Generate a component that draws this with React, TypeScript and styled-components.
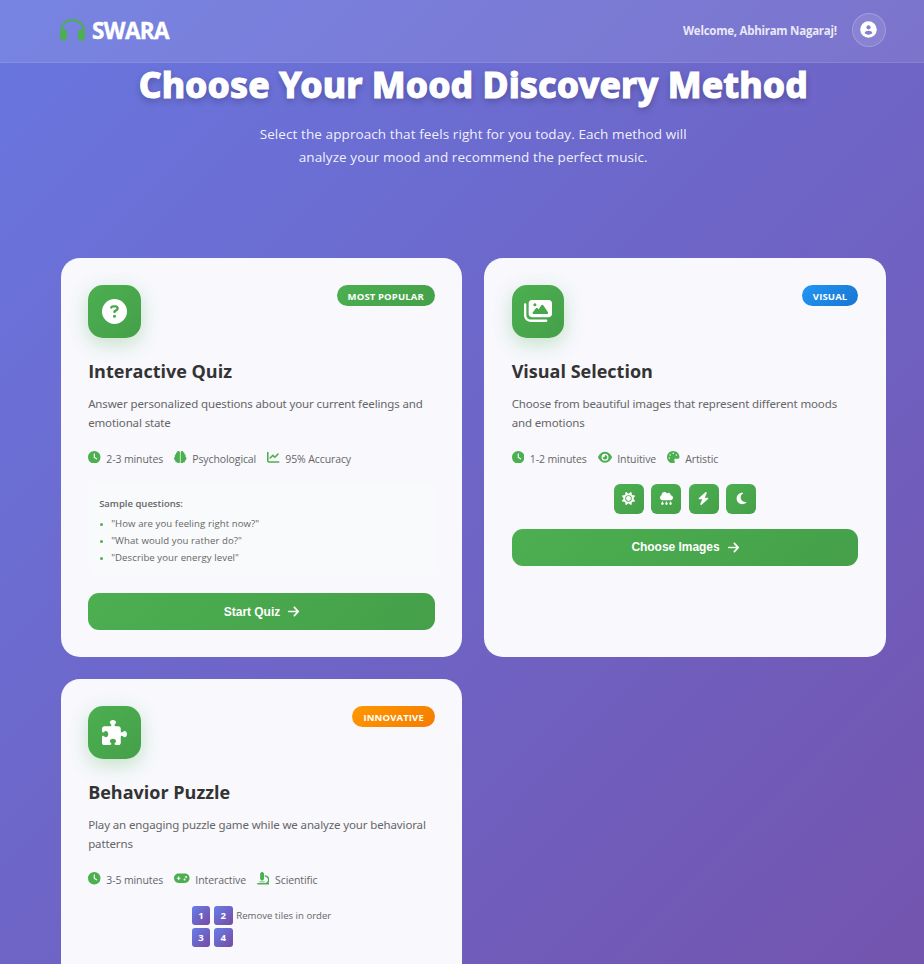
import React from "react";
import styled, { createGlobalStyle } from "styled-components";
import {
  FaArrowRight, FaBolt, FaBrain, FaChartLine, FaCircleQuestion, FaClock, FaCloudRain, FaEye,
  FaGamepad, FaImages, FaMicroscope, FaMoon, FaPalette, FaPuzzlePiece, FaSun,
} from "react-icons/fa6";

const green = "linear-gradient(135deg, #4caf50, #45a049)";
const ui = '"Open Sans", "Noto Sans", sans-serif';

const GlobalStyle = createGlobalStyle`
  * { box-sizing: border-box; margin: 0; padding: 0; }
  body { overflow: hidden; font-family: ${ui}; }
`;

const Page = styled.div`
  height: 964px;
  overflow: hidden;
  background: linear-gradient(135deg, #667eea 0%, #764ba2 100%) 0 -400px / 100% 1850px;
`;

const Header = styled.header`
  height: 63px;
  padding: 0 38.25px 1px 60px;
  display: flex;
  align-items: center;
  justify-content: space-between;
  background: rgba(255, 255, 255, 0.1);
  border-bottom: 1px solid rgba(255, 255, 255, 0.1);
`;

const Brand = styled.div`
  display: flex;
  align-items: center;
  gap: 7px;
  color: #fff;
  font-size: 22.5px;
  line-height: 30px;
  font-weight: 700;
  letter-spacing: -0.6px;
  -webkit-text-stroke: 0.4px #fff;

  svg { width: 25px; height: 22px; margin-top: -2px; }
`;

const Account = styled.div`
  display: flex;
  align-items: center;
  gap: 15px;
  color: rgba(255, 255, 255, 0.85);
  font-size: 11.5px;
  font-weight: 700;
  letter-spacing: -0.26px;
`;

const Avatar = styled.div`
  width: 34px;
  height: 34px;
  display: flex;
  align-items: center;
  justify-content: center;
  margin-bottom: 2px;
  padding-bottom: 1px;
  border: 1px solid rgba(255, 255, 255, 0.2);
  border-radius: 50%;
  background: rgba(255, 255, 255, 0.1);
`;

const Intro = styled.section`
  height: 195px;
  width: 825px;
  margin-left: 60.75px;
  text-align: center;
`;

const Heading = styled.h1`
  color: #fff;
  font-family: "Noto Sans", sans-serif;
  font-size: 35.5px;
  line-height: 43px;
  font-weight: 800;
  letter-spacing: 0.08px;
  white-space: nowrap;
  -webkit-text-stroke: 1px #fff;
  text-shadow: 0 3px 7px rgba(0, 0, 0, 0.25);
`;

const Lead = styled.p`
  width: 450px;
  margin: 17px auto 0;
  color: rgba(255, 255, 255, 0.92);
  font-size: 13.5px;
  line-height: 23px;
  letter-spacing: 0.09px;
`;

const Grid = styled.main`
  width: 825px;
  margin-left: 60.75px;
  display: grid;
  grid-template-columns: 1fr 1fr;
  grid-template-rows: 399px 399px;
  gap: 22.4px 22px;
`;

const Card = styled.article`
  padding: 27px 27.4px;
  border-radius: 19px;
  background: #f8f8fd;
`;

const CardTop = styled.div`
  display: flex;
  justify-content: space-between;
  align-items: flex-start;
`;

const Emblem = styled.div<{ $size: number }>`
  width: 52.5px;
  height: 52.5px;
  display: grid;
  place-items: center;
  border-radius: 15px;
  color: #fff;
  font-size: ${(p) => p.$size}px;
  background: ${green};
  box-shadow: 0 6px 19px rgba(76, 175, 80, 0.3);
`;

const tones = {
  green,
  blue: "linear-gradient(135deg, #2196f3, #1976d2)",
  orange: "linear-gradient(135deg, #ff9800, #f57c00)",
};

const Badge = styled.span<{ $tone: keyof typeof tones }>`
  height: 21px;
  padding: 1px 11px 0;
  border-radius: 15px;
  background: ${(p) => tones[p.$tone]};
  color: #fff;
  font-size: 9.5px;
  line-height: 21px;
  font-weight: 700;
  letter-spacing: 0.14px;
`;

const Title = styled.h2`
  margin-top: 21.2px;
  color: #333;
  font-size: 18px;
  line-height: 24px;
  font-weight: 700;
`;

const Description = styled.p`
  margin-top: 11px;
  height: 38px;
  color: #666;
  font-family: "Noto Sans", sans-serif;
  font-size: 11.5px;
  line-height: 19px;
  letter-spacing: -0.13px;
`;

const Facts = styled.div`
  margin-top: 17.2px;
  height: 18px;
  display: flex;
  gap: 11px;
`;

const Fact = styled.span`
  display: flex;
  gap: 5.6px;
  color: #666;
  font-size: 10.5px;
  line-height: 20px;
  letter-spacing: -0.1px;

  svg {
    flex: none;
    width: 12.5px;
    height: 12.5px;
    margin-top: 2px;
    color: #4caf50;
  }
  svg[viewBox="0 0 576 512"] { width: 14px; }
  svg[viewBox="0 0 640 512"] { width: 15.6px; }
`;

const Samples = styled.div`
  height: 92px;
  margin: 17.2px 0;
  padding: 11px;
  border-radius: 9px;
  background: #f9fafc;
  color: #666;
  font-size: 9.6px;
`;

const SamplesTitle = styled.h3`
  font-size: 9.5px;
  line-height: 17px;
  font-weight: 600;
`;

const SampleList = styled.ul`
  margin-top: 3px;
  list-style: none;
`;

const Sample = styled.li`
  display: flex;
  align-items: center;
  gap: 8px;
  height: 17px;
  letter-spacing: 0.08px;

  &::before {
    content: "";
    width: 3px;
    height: 3px;
    margin: 1px 0 0 1px;
    border-radius: 50%;
    background: #4caf50;
  }
`;

const Action = styled.button`
  width: 100%;
  height: 37px;
  display: flex;
  align-items: center;
  justify-content: center;
  gap: 7px;
  padding-left: 1px;
  border: 0;
  border-radius: 11px;
  background: ${green};
  color: #fff;
  font: 700 12px "Liberation Sans", Arial, sans-serif;
  letter-spacing: -0.04px;
`;

const Moods = styled.div`
  display: flex;
  justify-content: center;
  gap: 7.5px;
  margin: 17.1px 0 15px;
`;

const Mood = styled.span`
  width: 30px;
  height: 30px;
  display: grid;
  place-items: center;
  border-radius: 6px;
  background: ${green};
  color: #fff;
  font-size: 13px;
`;

const Puzzle = styled.div`
  display: flex;
  justify-content: center;
  gap: 3.5px;
  margin-top: 17.6px;
  color: #666;
  font-size: 9.6px;
  line-height: 20px;
`;

const Tiles = styled.div`
  display: grid;
  grid-template-columns: 18.75px 18.75px;
  grid-auto-rows: 18.75px;
  gap: 3.5px;
`;

const Tile = styled.span`
  border-radius: 3px;
  background: linear-gradient(135deg, #667eea, #764ba2);
  color: #fff;
  font-weight: 700;
  text-align: center;
`;

const HeadphonesIcon = () => (
  <svg viewBox="0 0 25 22" fill="#4caf50">
    <path d="M1.2 15V11.700C1.200 5.400 6.300 1.100 12.500 1.100S23.800 5.400 23.800 11.700V15" fill="none" stroke="#4caf50" strokeWidth="2" />
    <rect x="0.200" y="10.500" width="6.700" height="11" rx="2.800" />
    <rect x="18.100" y="10.500" width="6.700" height="11" rx="2.800" />
  </svg>
);

const ProfileIcon = () => (
  <svg width="17" height="17" viewBox="0 0 17 17">
    <circle cx="8.500" cy="8.500" r="8.300" fill="#fff" />
    <circle cx="8.500" cy="6.300" r="2.100" fill="#8680cf" />
    <path d="M4.600 12c.3-1.500 2-2.200 3.900-2.200s3.600.7 3.900 2.200c-1 1.300-2.400 1.700-3.900 1.700s-2.900-.4-3.900-1.700z" fill="#8680cf" />
  </svg>
);

type CardProps = {
  icon: React.ReactNode;
  iconSize?: number;
  badge: string;
  tone: keyof typeof tones;
  title: string;
  text: string;
  facts: [React.ReactNode, string][];
  children: React.ReactNode;
};

function MethodCard({ icon, iconSize = 25, badge, tone, title, text, facts, children }: CardProps) {
  return (
    <Card>
      <CardTop>
        <Emblem $size={iconSize}>{icon}</Emblem>
        <Badge $tone={tone}>{badge}</Badge>
      </CardTop>
      <Title>{title}</Title>
      <Description>{text}</Description>
      <Facts>
        {facts.map(([factIcon, label]) => (
          <Fact key={label}>{factIcon}{label}</Fact>
        ))}
      </Facts>
      {children}
    </Card>
  );
}

const questions = ['"How are you feeling right now?"', '"What would you rather do?"', '"Describe your energy level"'];

export default function App() {
  return (
    <Page>
      <GlobalStyle />
      <Header>
        <Brand><HeadphonesIcon />SWARA</Brand>
        <Account>
          Welcome, Abhiram Nagaraj!
          <Avatar><ProfileIcon /></Avatar>
        </Account>
      </Header>
      <Intro>
        <Heading>Choose Your Mood Discovery Method</Heading>
        <Lead>
          Select the approach that feels right for you today. Each method will
          analyze your mood and recommend the perfect music.
        </Lead>
      </Intro>
      <Grid>
        <MethodCard
          icon={<FaCircleQuestion />}
          badge="MOST POPULAR"
          tone="green"
          title="Interactive Quiz"
          text="Answer personalized questions about your current feelings and emotional state"
          facts={[[<FaClock />, "2-3 minutes"], [<FaBrain />, "Psychological"], [<FaChartLine />, "95% Accuracy"]]}
        >
          <Samples>
            <SamplesTitle>Sample questions:</SamplesTitle>
            <SampleList>
              {questions.map((q) => <Sample key={q}>{q}</Sample>)}
            </SampleList>
          </Samples>
          <Action>Start Quiz <FaArrowRight size={13} /></Action>
        </MethodCard>
        <MethodCard
          icon={<FaImages />}
          iconSize={28}
          badge="VISUAL"
          tone="blue"
          title="Visual Selection"
          text="Choose from beautiful images that represent different moods and emotions"
          facts={[[<FaClock />, "1-2 minutes"], [<FaEye />, "Intuitive"], [<FaPalette />, "Artistic"]]}
        >
          <Moods>
            <Mood><FaSun /></Mood>
            <Mood><FaCloudRain /></Mood>
            <Mood><FaBolt /></Mood>
            <Mood><FaMoon /></Mood>
          </Moods>
          <Action>Choose Images <FaArrowRight size={13} /></Action>
        </MethodCard>
        <MethodCard
          icon={<FaPuzzlePiece />}
          badge="INNOVATIVE"
          tone="orange"
          title="Behavior Puzzle"
          text="Play an engaging puzzle game while we analyze your behavioral patterns"
          facts={[[<FaClock />, "3-5 minutes"], [<FaGamepad />, "Interactive"], [<FaMicroscope />, "Scientific"]]}
        >
          <Puzzle>
            <Tiles>
              {[1, 2, 3, 4].map((n) => <Tile key={n}>{n}</Tile>)}
            </Tiles>
            Remove tiles in order
          </Puzzle>
        </MethodCard>
      </Grid>
    </Page>
  );
}
